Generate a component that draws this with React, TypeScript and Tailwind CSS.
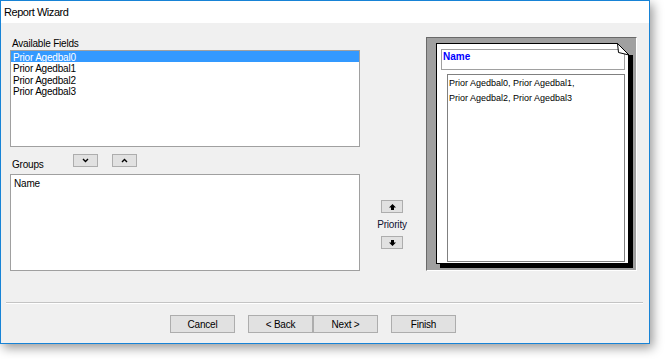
import React from 'react';

const ui = { fontFamily: '"Liberation Sans", Arial, sans-serif' };

const fields = ['Prior Agedbal0', 'Prior Agedbal1', 'Prior Agedbal2', 'Prior Agedbal3'];

const SmallButton: React.FC<{ w: string; children: React.ReactNode }> = ({ w, children }) => (
  <div className={`${w} h-[13px] bg-[#e1e1e1] border border-[#adadad] flex items-center justify-center`}>
    {children}
  </div>
);

const Chevron: React.FC<{ up?: boolean }> = ({ up }) => (
  <svg width="7" height="5" viewBox="0 0 7 5">
    <path d={up ? 'M1 4 L3.5 1.5 L6 4' : 'M1 1 L3.5 3.5 L6 1'} fill="none" stroke="#000" strokeWidth="1.4" />
  </svg>
);

const Arrow: React.FC<{ up?: boolean }> = ({ up }) => (
  <svg width="7" height="6" viewBox="0 0 7 6">
    <polygon
      points={up ? '3.5,0 7,3.5 5,3.5 5,6 2,6 2,3.5 0,3.5' : '3.5,6 7,2.5 5,2.5 5,0 2,0 2,2.5 0,2.5'}
      fill="#000"
    />
  </svg>
);

const WizButton: React.FC<{ label: string }> = ({ label }) => (
  <div className="w-[65px] h-[18px] bg-[#e1e1e1] border border-[#adadad] flex items-center justify-center text-[10px] tracking-[-0.2px] text-black">
    {label}
  </div>
);

const App: React.FC = () => {
  return (
    <div className="w-[665px] h-[359px] bg-white" style={ui}>
      <div className="w-[650px] h-[344px] border border-[#1783d6] flex flex-col shadow-[3px_4px_10px_rgba(0,0,0,0.4)]">
        <div className="h-[22px] bg-white pl-[3px] flex items-center text-[11px] tracking-[-0.45px] text-black">
          Report Wizard
        </div>

        <div className="flex-1 bg-[#f0f0f0] flex flex-col">
          <div className="h-[250px] flex">
            {/* left column */}
            <div className="ml-[9px] w-[350px] pt-[15px] flex flex-col text-[10px] tracking-[-0.2px] text-black">
              <div className="h-[12px] leading-[12px] pl-[2px]">Available Fields</div>
              <div className="h-[97px] bg-white border border-[#a0a0a0]">
                {fields.map((f, i) => (
                  <div
                    key={f}
                    className={
                      i === 0
                        ? 'h-[11.3px] leading-[13px] bg-[#3399ff] text-white pl-[2px]'
                        : 'h-[11.3px] leading-[13px] pl-[2px]'
                    }
                  >
                    {f}
                  </div>
                ))}
              </div>

              <div className="mt-[7px] h-[13px] flex items-start">
                <div className="w-[63px] pl-[2px] mt-[5px] leading-[12px]">Groups</div>
                <SmallButton w="w-[25px]">
                  <Chevron />
                </SmallButton>
                <div className="w-[14px]" />
                <SmallButton w="w-[25px]">
                  <Chevron up />
                </SmallButton>
              </div>

              <div className="mt-[7px] h-[97px] bg-white border border-[#a0a0a0] leading-[11px] pl-[3px] pt-[3px]">
                Name
              </div>
            </div>

            {/* priority */}
            <div className="ml-[21px] w-[22px] pt-[177px] flex flex-col items-center">
              <SmallButton w="w-[22px]">
                <Arrow up />
              </SmallButton>
              <div className="mt-[6px] leading-[12px] text-[10px] tracking-[-0.2px] text-[#101030] whitespace-nowrap">
                Priority
              </div>
              <div className="mt-[5px]">
                <SmallButton w="w-[22px]">
                  <Arrow />
                </SmallButton>
              </div>
            </div>

            {/* preview */}
            <div className="ml-[23px] mt-[14px] w-[211px] h-[234px] bg-[#a0a0a0] border-t border-l border-[#696969] border-b-white border-r-white border-b border-r pl-[9px] pt-[5px]">
              <div className="relative w-[193px] h-[221px] bg-white border border-black shadow-[4px_4px_0_#000] pl-[4px] pt-[5px]">
                <svg className="absolute -top-px -right-[5px]" width="16" height="13" viewBox="0 0 16 13">
                  <polygon points="0,0 16,0 16,12 12,12" fill="#a0a0a0" />
                  <polygon points="0.5,0.5 1.5,9.5 12,12" fill="#fff" stroke="#000" strokeWidth="1" />
                  <line x1="0.5" y1="0.5" x2="12" y2="12" stroke="#000" strokeWidth="1" />
                </svg>
                <div className="w-[184px] h-[21px] border border-[#a0a0a0] pl-[1px] pt-[1px] text-[10px] font-bold leading-[12px] text-[#0000ff]">
                  Name
                </div>
                <div className="ml-[6px] mt-[4px] w-[178px] h-[188px] border border-[#808080] pl-[1px] pt-[1px] text-[9px] leading-[14.5px] text-black">
                  Prior Agedbal0, Prior Agedbal1,
                  <br />
                  Prior Agedbal2, Prior Agedbal3
                </div>
              </div>
            </div>
          </div>

          <div className="mt-[29px] ml-[5px] mr-[6px] h-[2px] border-t border-[#c4c4c4] border-b border-b-white" />

          <div className="mt-[11px] pl-[169px] flex">
            <WizButton label="Cancel" />
            <div className="ml-[13px] flex">
              <WizButton label="< Back" />
              <WizButton label="Next >" />
            </div>
            <div className="ml-[13px]">
              <WizButton label="Finish" />
            </div>
          </div>
        </div>
      </div>
    </div>
  );
};

export default App;
